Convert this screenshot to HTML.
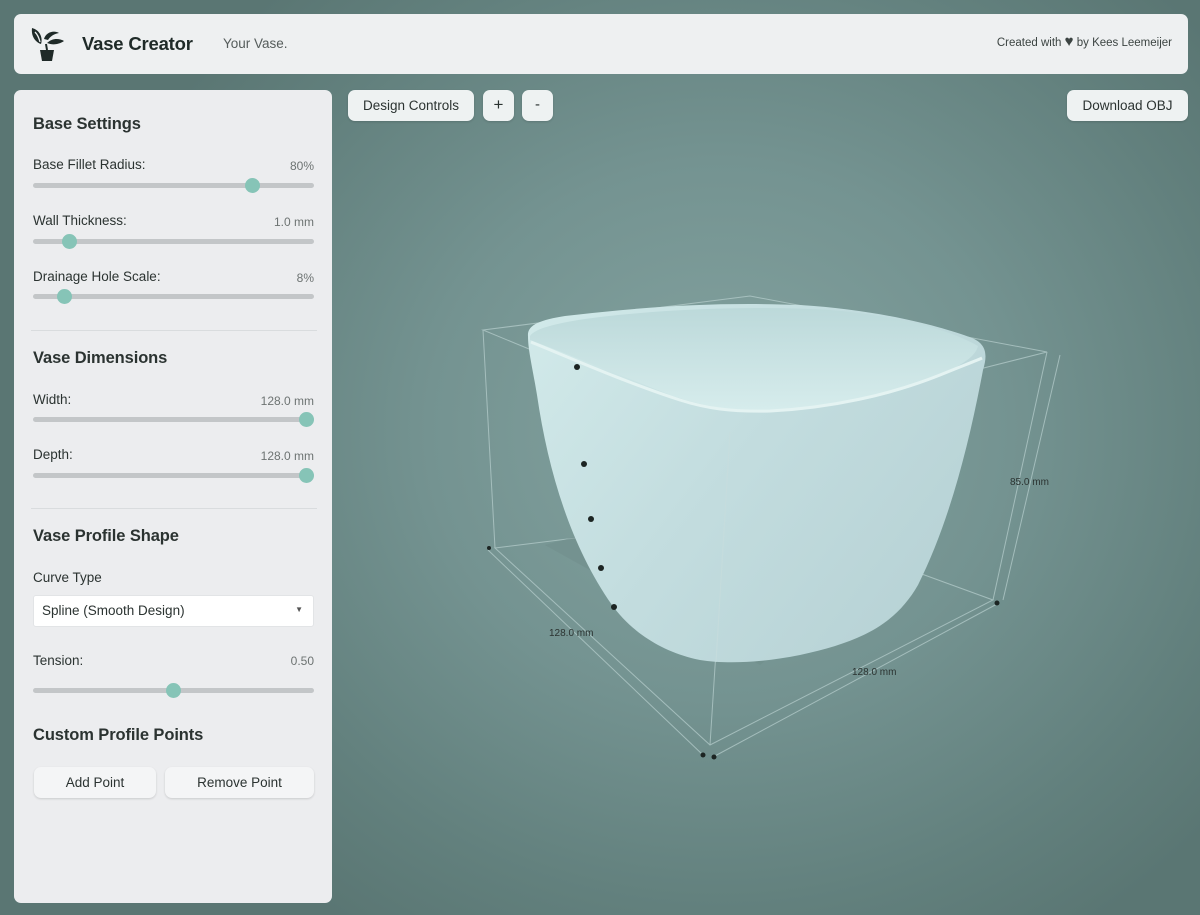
<!DOCTYPE html>
<html><head><meta charset="utf-8"><style>
*{box-sizing:border-box;margin:0;padding:0}
body{width:1200px;height:915px;overflow:hidden;font-family:"Liberation Sans",sans-serif;color:#2b3331;
background:radial-gradient(ellipse 650px 600px at 720px 430px,#84a3a0 0%,#749391 45%,#62807d 80%,#5a7673 100%);position:relative}
.abs{position:absolute}
.header{left:14px;top:14px;width:1174px;height:60px;background:#eef0f1;border-radius:7px}
.panel{left:14px;top:90px;width:318px;height:813px;background:#ecedef;border-radius:7px}
h2{position:absolute;font-size:16.5px;font-weight:bold;color:#2b3331;left:19px;letter-spacing:-0.1px}
.lbl{position:absolute;font-size:13.5px;color:#2b3331;left:19px}
.val{position:absolute;font-size:12px;color:#6d7372;right:18px}
.track{position:absolute;left:19px;width:281px;height:5px;border-radius:3px;background:#c3c6c8}
.thumb{position:absolute;width:15px;height:15px;border-radius:50%;background:#86c4b7;top:-5px}
.sep{position:absolute;left:17px;width:286px;height:1px;background:#d9dcde}
.btn{position:absolute;background:#eef2f2;border-radius:7px;font-size:13.5px;color:#2b3331;text-align:center;box-shadow:0 1px 2px rgba(0,0,0,.15)}
</style></head><body>
<div class="abs header">
<svg class="abs" style="left:14px;top:12px" width="40" height="38" viewBox="0 0 40 38">
<path d="M4 2 C12 4 15 12 13 18 C7 16 3 10 4 2Z" fill="#1f2a28"/>
<path d="M7 6 C10 9 11 12 12 16" stroke="#eef0f1" stroke-width="1.3" fill="none"/>
<path d="M16 13 C18 6 26 4 31 7 C25 8 22 11 20 14Z" fill="#1f2a28"/>
<path d="M19 17 C24 12 31 12 36 15 C30 19 24 19 19 17Z" fill="#1f2a28"/>
<path d="M12 24 L26 24 L24 35 L14 35Z" fill="#1f2a28"/>
<path d="M18 18 L19 24" stroke="#1f2a28" stroke-width="2"/>
</svg>
<div class="abs" style="left:68px;top:19px;font-size:18.5px;font-weight:bold;color:#1f2a28;letter-spacing:-0.2px">Vase Creator</div>
<div class="abs" style="left:209px;top:22px;font-size:13.5px;color:#555c5b">Your Vase.</div>
<div class="abs" style="right:16px;top:22px;font-size:11.5px;color:#3c4442">Created with <span style="font-size:15px;line-height:11px">&#9829;</span> by Kees Leemeijer</div>
</div>

<div class="abs panel">
<h2 style="top:25px">Base Settings</h2>
<div class="lbl" style="top:67px">Base Fillet Radius:</div><div class="val" style="top:69px">80%</div>
<div class="track" style="top:93px"><div class="thumb" style="left:212px"></div></div>
<div class="lbl" style="top:123px">Wall Thickness:</div><div class="val" style="top:125px">1.0 mm</div>
<div class="track" style="top:149px"><div class="thumb" style="left:29px"></div></div>
<div class="lbl" style="top:179px">Drainage Hole Scale:</div><div class="val" style="top:181px">8%</div>
<div class="track" style="top:204px"><div class="thumb" style="left:24px"></div></div>
<div class="sep" style="top:240px"></div>
<h2 style="top:259px">Vase Dimensions</h2>
<div class="lbl" style="top:302px">Width:</div><div class="val" style="top:304px">128.0 mm</div>
<div class="track" style="top:327px"><div class="thumb" style="left:266px"></div></div>
<div class="lbl" style="top:357px">Depth:</div><div class="val" style="top:359px">128.0 mm</div>
<div class="track" style="top:383px"><div class="thumb" style="left:266px"></div></div>
<div class="sep" style="top:418px"></div>
<h2 style="top:437px">Vase Profile Shape</h2>
<div class="lbl" style="top:480px">Curve Type</div>
<div class="abs" style="left:19px;top:505px;width:281px;height:32px;background:#fff;border-radius:3px;border:1px solid #e2e4e6;font-size:13.5px;padding:7px 0 0 8px">Spline (Smooth Design)<span style="position:absolute;right:10px;top:9px;font-size:8px;color:#555">&#9660;</span></div>
<div class="lbl" style="top:563px">Tension:</div><div class="val" style="top:564px">0.50</div>
<div class="track" style="top:598px"><div class="thumb" style="left:133px"></div></div>
<h2 style="top:636px">Custom Profile Points</h2>
<div class="btn" style="left:20px;top:677px;width:122px;height:31px;line-height:31px;background:#f4f5f6">Add Point</div>
<div class="btn" style="left:151px;top:677px;width:149px;height:31px;line-height:31px;background:#f4f5f6">Remove Point</div>
</div>

<div class="btn" style="left:348px;top:90px;width:126px;height:31px;line-height:31px">Design Controls</div>
<div class="btn" style="left:483px;top:90px;width:31px;height:31px;line-height:30px;font-size:17px">+</div>
<div class="btn" style="left:522px;top:90px;width:31px;height:31px;line-height:29px;font-size:15px">-</div>
<div class="btn" style="left:1067px;top:90px;width:121px;height:31px;line-height:31px">Download OBJ</div>

<svg class="abs" style="left:0;top:0" width="1200" height="915" viewBox="0 0 1200 915">
<defs>
<linearGradient id="vg" x1="0" y1="0" x2="1" y2="0.6"><stop offset="0" stop-color="#d2eaea"/><stop offset="0.5" stop-color="#c3dddf"/><stop offset="1" stop-color="#b8d3d6"/></linearGradient>
<linearGradient id="ig" x1="0" y1="0" x2="0" y2="1"><stop offset="0" stop-color="#bcd9da"/><stop offset="1" stop-color="#d6ecec"/></linearGradient>
</defs>
<g stroke="#b9d0cf" stroke-width="1" fill="none" opacity=".7">
<path d="M483 330 L750 296 L1047 352 L730 432 Z"/>
<path d="M483 330 L495 548 M730 432 L710 745 M1047 352 L993 600"/>
<path d="M495 548 L710 745 L993 600 L760 515 Z"/>
<path d="M488 550 L703 755 M713 757 L997 604 M1060 355 L1003 600"/>
</g>
<path d="M545 545 L690 505 L880 565 L760 665 Z" fill="#6f8b8a" opacity=".45"/>
<path d="M528 336 C527 325 540 320 565 316 C650 306 720 302 800 305 C880 310 940 326 972 338 C986 344 988 354 983 370 C968 450 948 525 918 585 C895 625 860 642 800 655 C760 663 725 664 700 660 C660 652 630 630 612 605 C570 545 548 470 537 395 C532 365 528 350 528 336Z" fill="url(#vg)"/>
<path d="M530 336 C535 328 560 322 600 317 C680 308 760 306 830 310 C900 316 950 330 978 346 C975 358 960 366 930 380 C880 400 820 410 760 410 C720 410 700 405 670 395 C620 375 570 355 530 340Z" fill="url(#ig)"/>
<path d="M531 342 C575 360 630 384 680 400 C705 408 730 412 770 411 C830 408 890 395 940 375 C962 366 978 360 982 358" stroke="#e4f3f2" stroke-width="3" fill="none"/>
<path d="M730 432 L716 662" stroke="#c8dddd" stroke-width="1" opacity=".7"/>
<g fill="#1c2422">
<circle cx="577" cy="367" r="3"/><circle cx="584" cy="464" r="3"/><circle cx="591" cy="519" r="3"/><circle cx="601" cy="568" r="3"/><circle cx="614" cy="607" r="3"/>
<circle cx="489" cy="548" r="2"/><circle cx="997" cy="603" r="2.5"/><circle cx="703" cy="755" r="2.5"/><circle cx="714" cy="757" r="2.5"/>
</g>
<g font-family="Liberation Sans,sans-serif" font-size="10" fill="#2b3331">
<text x="549" y="636">128.0 mm</text><text x="852" y="675">128.0 mm</text><text x="1010" y="485">85.0 mm</text>
</g>
</svg>
</body></html>
